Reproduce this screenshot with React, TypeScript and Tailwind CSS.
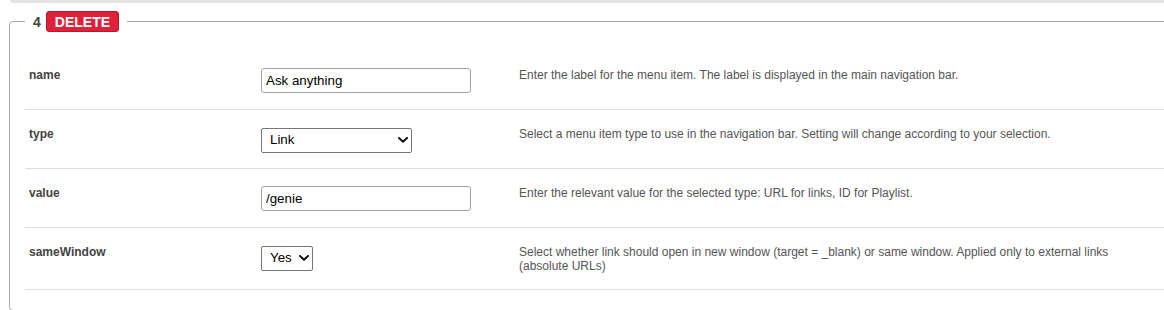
const rows = [
  {
    key: 'name',
    control: { kind: 'input', value: 'Ask anything' },
    help: 'Enter the label for the menu item. The label is displayed in the main navigation bar.',
  },
  {
    key: 'type',
    control: { kind: 'select', value: 'Link', options: ['Link', 'Playlist', 'Separator'], width: 'w-[151px]' },
    help: 'Select a menu item type to use in the navigation bar. Setting will change according to your selection.',
  },
  {
    key: 'value',
    control: { kind: 'input', value: '/genie' },
    help: 'Enter the relevant value for the selected type: URL for links, ID for Playlist.',
  },
  {
    key: 'sameWindow',
    control: { kind: 'select', value: 'Yes', options: ['Yes', 'No'], width: 'w-[52px]' },
    help: 'Select whether link should open in new window (target = _blank) or same window. Applied only to external links (absolute URLs)',
  },
];

function Chevron() {
  return (
    <svg width="10" height="6" viewBox="0 0 10 6" className="pointer-events-none absolute right-[4px] top-1/2 -translate-y-1/2">
      <path d="M1 1 L5 4.8 L9 1" fill="none" stroke="#111" strokeWidth="2" strokeLinecap="round" strokeLinejoin="round" />
    </svg>
  );
}

type Control =
  | { kind: 'input'; value: string }
  | { kind: 'select'; value: string; options: string[]; width: string };

function Field({ control }: { control: Control }) {
  if (control.kind === 'input') {
    return (
      <input
        type="text"
        defaultValue={control.value}
        className="h-[25px] w-[210px] rounded-[3px] border border-[#a3a3a3] bg-white px-[4px] text-[13.333px] text-black outline-none"
      />
    );
  }
  return (
    <div className={`relative h-[25px] ${control.width}`}>
      <select
        defaultValue={control.value}
        className="h-full w-full appearance-none rounded-[2px] border border-[#767676] bg-white pl-[8px] text-[13.333px] text-black outline-none"
      >
        {control.options.map((o) => (
          <option key={o}>{o}</option>
        ))}
      </select>
      <Chevron />
    </div>
  );
}

export default function App() {
  return (
    <div className="h-[310px] w-[1164px] overflow-hidden bg-white font-['Liberation_Sans',Arial,sans-serif]">
      <div className="ml-[10px] h-[3px] rounded-bl-[3px] bg-[#e5e5e5]" />
      <fieldset className="ml-[9px] mt-[8px] w-[1200px] rounded-[4px] border border-[#a9a9a9] pb-[20px] pl-[15px] pt-[19px]">
        <legend className="flex items-center gap-[5px] px-[8px]">
          <span className="text-[14px] font-bold leading-[16px] text-[#444]">4</span>
          <button
            type="button"
            className="h-[21px] rounded-[3px] border border-[#b5172b] bg-[#e0213a] px-[8px] text-[14px] font-bold leading-[16px] text-white"
          >
            DELETE
          </button>
        </legend>

        {rows.map((row) => (
          <div key={row.key} className="flex items-start border-b border-[#dddddd] pb-[16px] pt-[17px]">
            <div className="w-[236px] pl-[4px] text-[12px] font-bold leading-[14px] text-[#444]">{row.key}</div>
            <div className="w-[258px]">
              <Field control={row.control as Control} />
            </div>
            <div className="w-[620px] text-[12px] leading-[14px] text-[#555]">{row.help}</div>
          </div>
        ))}
      </fieldset>
    </div>
  );
}
